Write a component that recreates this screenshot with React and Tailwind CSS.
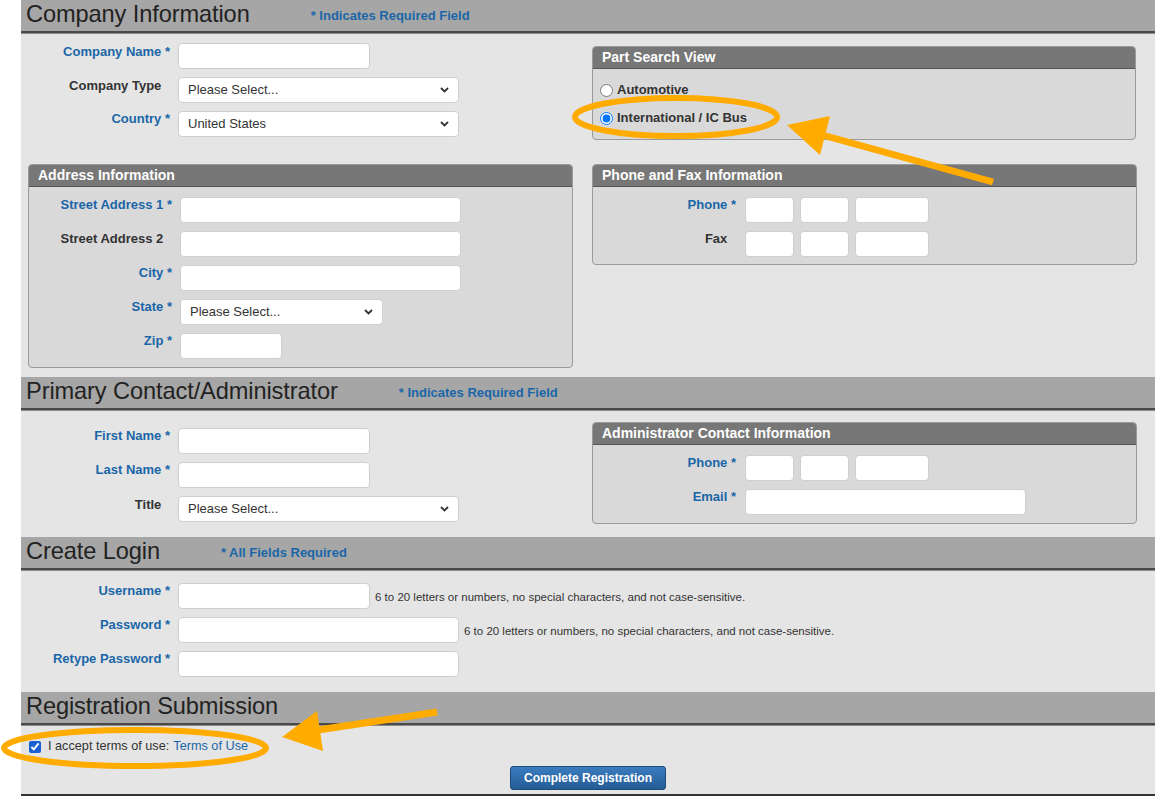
import React from "react";

const BLUE = "text-[#1a66a8]";

const SectionHeader = ({ title, note }) => (
  <div className="h-[33px] bg-[#a6a6a6] border-b-2 border-[#4a4a4a] shadow-[0_1px_0_#8c8c8c] flex items-center pl-[5px]">
    <h2 className="text-[23.6px] leading-[26px] text-[#222] tracking-[-0.1px] -mt-[3px]">{title}</h2>
    {note && <span className={`ml-[61px] mt-[1px] text-[13px] font-bold ${BLUE}`}>{note}</span>}
  </div>
);

const Label = ({ text, req, w }) => (
  <div className={`${w} shrink-0 text-right text-[13px] font-bold leading-[16px] ${req ? BLUE : "text-[#333]"}`}>
    {text}
    <span className={req ? "" : "invisible"}> *</span>
  </div>
);

const TextInput = ({ w }) => (
  <input type="text" className={`${w} h-[26px] bg-white border border-[#cfcfcf] rounded-[4px] outline-none`} />
);

const Select = ({ w, value }) => (
  <div className={`${w} relative h-[26px]`}>
    <select className="appearance-none w-full h-full bg-white border border-[#cfcfcf] rounded-[4px] pl-[9px] text-[13px] text-[#333] outline-none">
      <option>{value}</option>
    </select>
    <svg className="absolute right-[10px] top-[10px] pointer-events-none" width="9" height="6" viewBox="0 0 9 6">
      <path d="M1 1l3.5 3.5L8 1" fill="none" stroke="#333" strokeWidth="1.8" />
    </svg>
  </div>
);

const Row = ({ children }) => <div className="flex items-start h-[34px]">{children}</div>;

const Box = ({ title, className, children }) => (
  <div className={`${className} border border-[#9a9a9a] rounded-[4px] bg-[#d9d9d9] overflow-hidden`}>
    <div className="h-[22px] bg-[#777] border-b border-[#555] text-white font-bold text-[14px] leading-[21px] pl-[9px]">
      {title}
    </div>
    {children}
  </div>
);

const PhoneInputs = () => (
  <div className="flex gap-[6px]">
    <TextInput w="w-[49px]" />
    <TextInput w="w-[49px]" />
    <TextInput w="w-[74px]" />
  </div>
);

const Hint = () => (
  <span className="ml-[5px] mt-[6px] text-[11.5px] text-[#333]">
    6 to 20 letters or numbers, no special characters, and not case-sensitive.
  </span>
);

export default function App() {
  return (
    <div className="relative w-[1155px] h-[797px] bg-white font-['Liberation_Sans',Arial,sans-serif] overflow-hidden">
      <div className="ml-[21px] bg-[#e5e5e5] border-b-2 border-[#333]">
        {/* Company Information */}
        <SectionHeader title="Company Information" note="* Indicates Required Field" />
        <div className="flex pt-[10px] pb-[9px]">
          <div className="w-[567px] shrink-0">
            <Row>
              <Label text="Company Name" req w="w-[157px] pr-2 pt-[1px]" />
              <TextInput w="w-[192px]" />
            </Row>
            <Row>
              <Label text="Company Type" w="w-[157px] pr-2 pt-[1px]" />
              <Select w="w-[281px]" value="Please Select..." />
            </Row>
            <Row>
              <Label text="Country" req w="w-[157px] pr-2" />
              <Select w="w-[281px]" value="United States" />
            </Row>
            <Box title="Address Information" className="ml-[7px] mt-[19px] w-[545px]">
              <div className="pt-[10px]">
                <Row>
                  <Label text="Street Address 1" req w="w-[151px] pr-2" />
                  <TextInput w="w-[281px]" />
                </Row>
                <Row>
                  <Label text="Street Address 2" w="w-[151px] pr-2" />
                  <TextInput w="w-[281px]" />
                </Row>
                <Row>
                  <Label text="City" req w="w-[151px] pr-2" />
                  <TextInput w="w-[281px]" />
                </Row>
                <Row>
                  <Label text="State" req w="w-[151px] pr-2" />
                  <Select w="w-[203px]" value="Please Select..." />
                </Row>
                <Row>
                  <Label text="Zip" req w="w-[151px] pr-2" />
                  <TextInput w="w-[102px]" />
                </Row>
              </div>
            </Box>
          </div>
          <div className="pl-[4px] pt-[3px]">
            <Box title="Part Search View" className="w-[544px]">
              <div className="flex flex-col gap-2 pt-[11px] pb-[11px] pl-[7px] text-[13px] font-bold text-[#333]">
                <label className="flex items-center gap-[4px] h-[20px]">
                  <input type="radio" name="view" className="m-0 w-[13px] h-[13px]" />
                  Automotive
                </label>
                <label className="flex items-center gap-[4px] h-[20px]">
                  <input type="radio" name="view" defaultChecked className="m-0 w-[13px] h-[13px]" />
                  International / IC Bus
                </label>
              </div>
            </Box>
            <Box title="Phone and Fax Information" className="w-[545px] mt-[24px]">
              <div className="pt-[10px] -mb-[1px]">
                <Row>
                  <Label text="Phone" req w="w-[152px] pr-[9px]" />
                  <PhoneInputs />
                </Row>
                <Row>
                  <Label text="Fax" w="w-[152px] pr-[9px]" />
                  <PhoneInputs />
                </Row>
              </div>
            </Box>
          </div>
        </div>

        {/* Primary Contact */}
        <SectionHeader title="Primary Contact/Administrator" note="* Indicates Required Field" />
        <div className="flex pb-[7px]">
          <div className="w-[567px] shrink-0 pt-[18px]">
            <Row>
              <Label text="First Name" req w="w-[157px] pr-2" />
              <TextInput w="w-[192px]" />
            </Row>
            <Row>
              <Label text="Last Name" req w="w-[157px] pr-2" />
              <TextInput w="w-[192px]" />
            </Row>
            <Row>
              <Label text="Title" w="w-[157px] pr-2 pt-[1px]" />
              <Select w="w-[281px]" value="Please Select..." />
            </Row>
          </div>
          <div className="pl-[4px] pt-[12px]">
            <Box title="Administrator Contact Information" className="w-[545px]">
              <div className="pt-[10px]">
                <Row>
                  <Label text="Phone" req w="w-[152px] pr-[9px]" />
                  <PhoneInputs />
                </Row>
                <Row>
                  <Label text="Email" req w="w-[152px] pr-[9px]" />
                  <TextInput w="w-[281px]" />
                </Row>
              </div>
            </Box>
          </div>
        </div>

        {/* Create Login */}
        <SectionHeader title="Create Login" note="* All Fields Required" />
        <div className="pt-[13px] pb-[7px]">
          <Row>
            <Label text="Username" req w="w-[157px] pr-2" />
            <TextInput w="w-[192px]" />
            <Hint />
          </Row>
          <Row>
            <Label text="Password" req w="w-[157px] pr-2" />
            <TextInput w="w-[281px]" />
            <Hint />
          </Row>
          <Row>
            <Label text="Retype Password" req w="w-[157px] pr-2" />
            <TextInput w="w-[281px]" />
          </Row>
        </div>

        {/* Registration Submission */}
        <SectionHeader title="Registration Submission" />
        <div className="pt-[14px] pb-[4px]">
          <label className="flex items-center h-[16px] pl-[8px] text-[12.7px] text-[#333]">
            <input type="checkbox" defaultChecked className="m-0 w-[12px] h-[12px] accent-[#1a5fd0]" />
            <span className="ml-[7px]">I accept terms of use:</span>
            <a href="#" className={`ml-[4px] ${BLUE}`}>Terms of Use</a>
          </label>
          <div className="flex justify-center mt-[11px]">
            <button className="w-[156px] h-[24px] rounded-[3px] border border-[#1d4a78] bg-gradient-to-b from-[#3b7dc0] to-[#255c94] text-white text-[12px] font-bold">
              Complete Registration
            </button>
          </div>
        </div>
      </div>

      {/* annotations */}
      <svg className="absolute left-0 top-0 pointer-events-none" width="1155" height="797">
        <ellipse cx="676" cy="117" rx="101" ry="19" fill="none" stroke="#ffab00" strokeWidth="6" />
        <line x1="993" y1="182" x2="815" y2="133" stroke="#ffab00" strokeWidth="7" />
        <polygon points="787,125 830,116 820,155" fill="#ffab00" />
        <ellipse cx="135" cy="748" rx="131" ry="18" fill="none" stroke="#ffab00" strokeWidth="6" />
        <line x1="437" y1="712" x2="305" y2="732" stroke="#ffab00" strokeWidth="7" />
        <polygon points="282,737 317,711 323,751" fill="#ffab00" />
      </svg>
    </div>
  );
}
